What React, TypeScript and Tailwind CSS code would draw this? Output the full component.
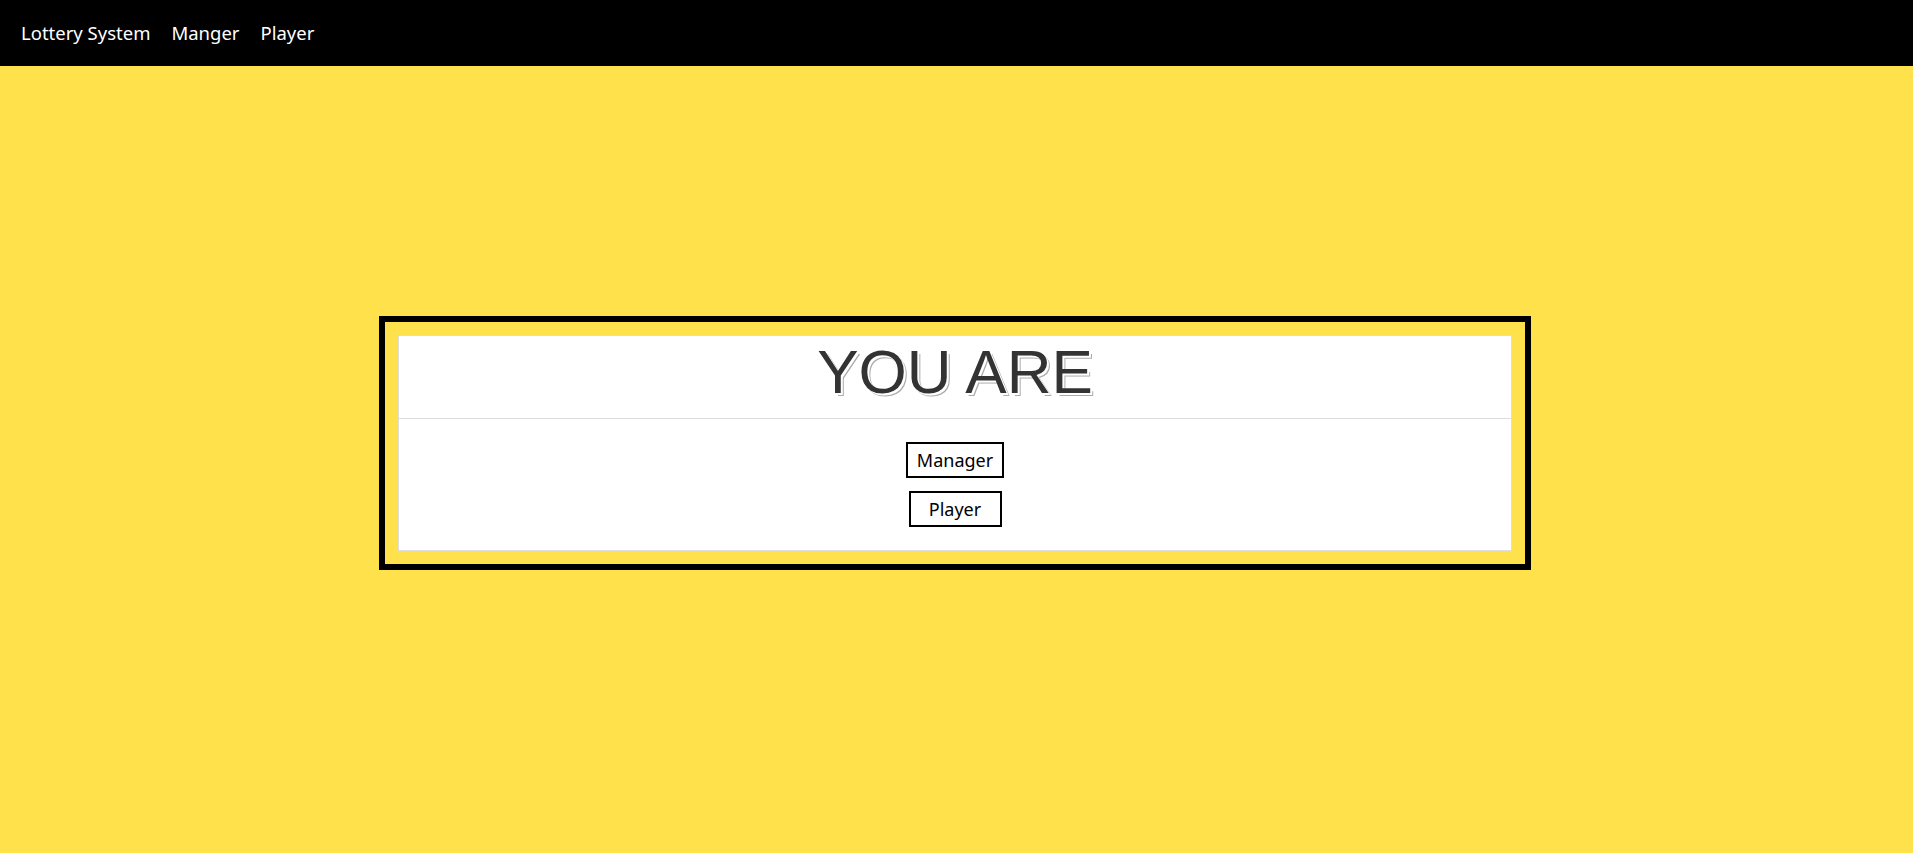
import React from 'react';

export default function App() {
  return (
    <div className="min-h-[853px] bg-[#ffe14c] font-['Noto_Sans',sans-serif]">
      <nav className="h-[66px] bg-black flex items-center pl-[21px] gap-[21px] text-white text-[18.5px]">
        <span>Lottery System</span>
        <span>Manger</span>
        <span>Player</span>
      </nav>

      <div className="pt-[250px] pl-[379px]">
        <div className="w-[1152px] border-[6px] border-black p-[13px]">
          <div className="bg-white border border-[#ddd]">
            <div className="h-[83px] border-b border-[#ddd] flex justify-center pt-[5px]">
              <h1 className="font-['Liberation_Sans',Arial,sans-serif] text-[62px] leading-none text-[#333] [text-shadow:2px_2px_0_#fff,3px_3px_0_#aaa]">
                YOU ARE
              </h1>
            </div>
            <div className="flex flex-col items-center gap-[13px] pt-[23px] pb-[23px]">
              <button className="w-[98px] h-[36px] border-2 border-black bg-white text-[18px] text-black">
                Manager
              </button>
              <button className="w-[93px] h-[36px] border-2 border-black bg-white text-[18px] text-black">
                Player
              </button>
            </div>
          </div>
        </div>
      </div>
    </div>
  );
}
